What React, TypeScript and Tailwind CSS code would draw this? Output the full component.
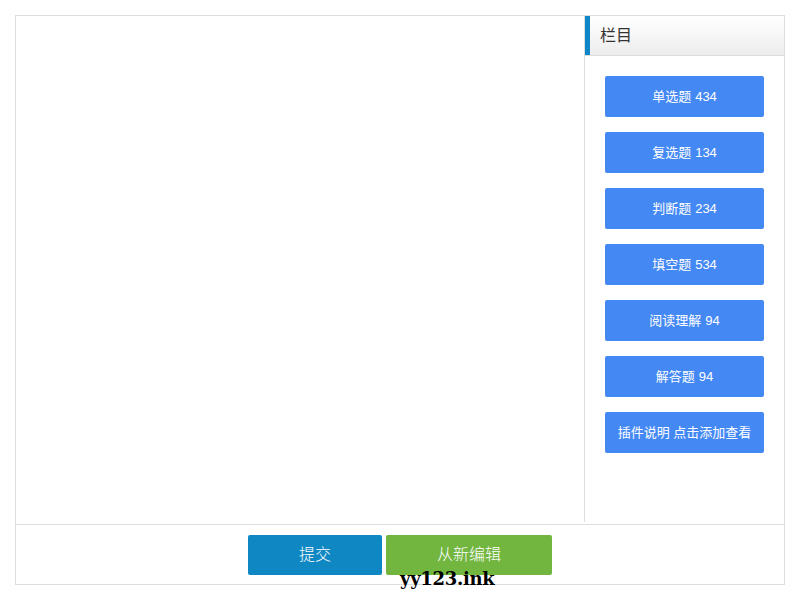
const cats = [
  { name: '单选题', count: '434' },
  { name: '复选题', count: '134' },
  { name: '判断题', count: '234' },
  { name: '填空题', count: '534' },
  { name: '阅读理解', count: '94' },
  { name: '解答题', count: '94' },
  { name: '插件说明 点击添加查看', count: '' },
]

export default function App() {
  return (
    <div
      className="w-[800px] h-[600px] bg-white pt-[15px] px-[15px] relative"
      style={{ fontFamily: '"Liberation Sans", "Noto Sans CJK SC", sans-serif' }}
    >
      <div className="w-[770px] h-[570px] border border-[#dddddd] flex flex-col">
        {/* editor + sidebar */}
        <div className="flex h-[506px]">
          <div className="flex-1" />
          <div className="w-[200px] h-[506px] border-l border-[#dddddd] flex flex-col">
            <div className="h-[40px] flex items-center border-b border-[#dddddd] bg-gradient-to-b from-white to-[#ededed]">
              <div className="w-[5px] h-full bg-[#0e87c8]" />
              <span className="ml-[10px] text-[16px] text-[#333333]">栏目</span>
            </div>
            <div className="flex flex-col items-center pt-[20px] gap-[15px]">
              {cats.map((c) => (
                <div
                  key={c.name}
                  className="w-[159px] h-[41px] rounded-[2px] bg-[#4488f4] text-white text-[13px] flex items-center justify-center"
                >
                  {c.name}
                  {c.count && <span className="ml-[4px]">{c.count}</span>}
                </div>
              ))}
            </div>
          </div>
        </div>
        {/* toolbar */}
        <div className="mt-[2px] flex-1 border-t border-[#dddddd] flex justify-center items-start pt-[10px] gap-[4px]">
          <button className="w-[134px] h-[40px] rounded-[2px] bg-[#0e87c2] text-white text-[16px] font-light">
            提交
          </button>
          <button className="w-[166px] h-[40px] rounded-[2px] bg-[#72b63f] text-white text-[16px] font-light">
            从新编辑
          </button>
        </div>
      </div>
      <div
        className="absolute left-[400px] top-[570px] text-[18px] font-bold text-black leading-none tracking-[-0.3px]"
        style={{ fontFamily: '"DejaVu Serif", serif' }}
      >
        yy123.ink
      </div>
    </div>
  )
}
